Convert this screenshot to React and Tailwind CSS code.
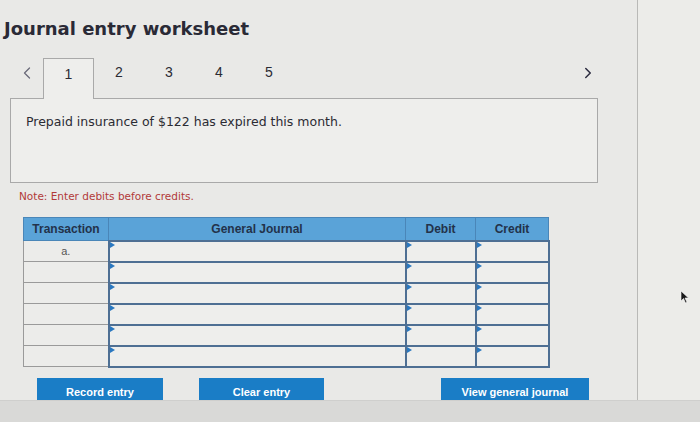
import { ChevronLeft, ChevronRight } from 'lucide-react';

const ROWS = ['a.', '', '', '', '', ''];

function Flag() {
  return (
    <span className="absolute left-0 top-0 h-0 w-0 border-y-[3px] border-l-[5px] border-y-transparent border-l-[#2a78c0]" />
  );
}

function InputCell({ className = '' }) {
  return (
    <td className={`relative h-[21px] border-2 border-[#4e6f93] bg-[#eeeeec] p-0 ${className}`}>
      <Flag />
    </td>
  );
}

export default function App() {
  return (
    <div className="flex h-[422px] w-[700px] flex-col overflow-hidden bg-[#e9e9e7] font-['DejaVu_Sans',sans-serif] text-[#2b2b33]">
      <div className="flex min-h-0 flex-1 overflow-hidden">
        <div className="w-[638px] border-r border-[#b9b9b7] pt-[17px]">
          <h1 className="pl-[4px] text-[18px] font-bold leading-[24px] text-[#2a2a36]">Journal entry worksheet</h1>

          <div className="mt-[16px] flex h-[41px] items-end pl-[10px] pr-[40px]">
            <div className="flex h-full w-[33px] items-center justify-center pb-[10px] text-[#6a6a78]">
              <ChevronLeft size={20} strokeWidth={1.5} />
            </div>
            <div className="relative -mb-px flex h-[41px] w-[51px] items-center justify-center border border-b-0 border-[#a9a9a9] bg-[#eeeeec] pb-[10px] text-[14px] font-['Liberation_Sans',sans-serif]">
              1
            </div>
            {[2, 3, 4, 5].map((n) => (
              <div key={n} className="flex h-full w-[50px] items-center justify-center pb-[10px] text-[14px] font-['Liberation_Sans',sans-serif]">
                {n}
              </div>
            ))}
            <div className="ml-auto flex h-full items-center pb-[10px] text-[#2b2b40]">
              <ChevronRight size={18} strokeWidth={2} />
            </div>
          </div>

          <div className="mx-[10px] h-[85px] w-[588px] border border-[#a9a9a9] bg-[#eeeeec] px-[15px] pt-[14px] text-[12.5px]">
            Prepaid insurance of $122 has expired this month.
          </div>

          <p className="mt-[6px] pl-[19px] text-[10.5px] leading-[14px] text-[#b23a3a]">Note: Enter debits before credits.</p>

          <table className="ml-[23px] mt-[14px] border-collapse font-['Liberation_Sans',sans-serif] text-[12px]">
            <thead>
              <tr className="h-[23px] bg-[#5aa3d8] font-bold text-[#23324a]">
                <th className="w-[85px] border border-[#4a86b8] font-bold">Transaction</th>
                <th className="w-[297px] border border-[#4a86b8] font-bold">General Journal</th>
                <th className="w-[70px] border border-[#4a86b8] font-bold">Debit</th>
                <th className="w-[73px] border border-[#4a86b8] font-bold">Credit</th>
              </tr>
            </thead>
            <tbody>
              {ROWS.map((r, i) => (
                <tr key={i}>
                  <td className="h-[20px] border border-[#9a9a9a] bg-[#ececea] p-0 text-center text-[11px] text-[#555]">{r}</td>
                  <InputCell />
                  <InputCell />
                  <InputCell />
                </tr>
              ))}
            </tbody>
          </table>

          <div className="mt-[10px] flex items-start font-['Liberation_Sans',sans-serif] text-[11px] font-bold text-white">
            <button type="button" className="ml-[37px] h-[26px] w-[126px] bg-[#1a7dc6] pt-[4px]">Record entry</button>
            <button type="button" className="ml-[36px] h-[26px] w-[125px] bg-[#1a7dc6] pt-[4px]">Clear entry</button>
            <button type="button" className="ml-[117px] h-[26px] w-[148px] bg-[#1a7dc6] pt-[4px]">View general journal</button>
          </div>
        </div>
        <div className="relative flex-1 bg-[#ecece9]">
          <svg className="absolute left-[42px] top-[290px]" width="10" height="14" viewBox="0 0 10 14">
            <path d="M1 1 L1 11 L3.5 8.5 L5.5 13 L7 12.3 L5 8 L8.5 8 Z" fill="#1a1a1a" stroke="#fff" strokeWidth="0.6" />
          </svg>
        </div>
      </div>
      <div className="h-[22px] shrink-0 border-t border-[#cfcfcd] bg-[#d9d9d7]" />
    </div>
  );
}
